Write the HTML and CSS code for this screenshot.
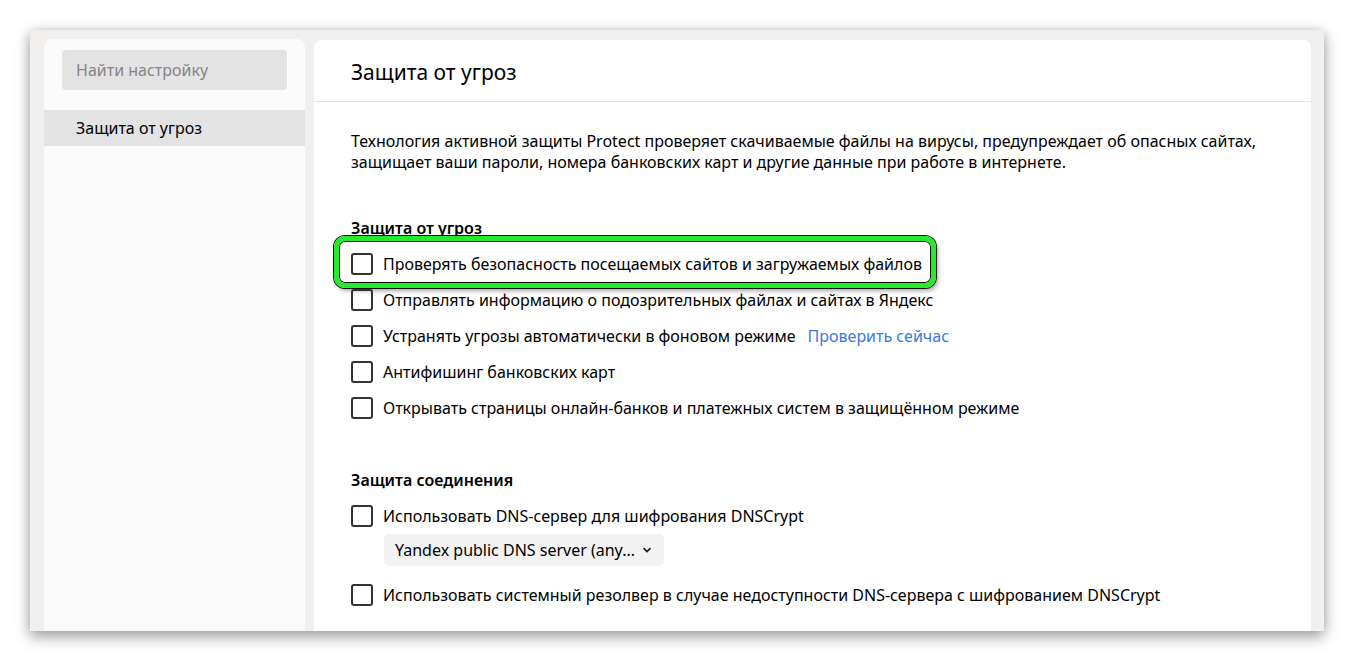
FILE: index.html
```html
<!DOCTYPE html>
<html lang="ru">
<head>
<meta charset="utf-8">
<link rel="stylesheet" href="styles.css">
</head>
<body>
<div class="window">
  <aside class="sidebar">
    <div class="search">Найти настройку</div>
    <nav class="nav">
      <div class="nav-item active">Защита от угроз</div>
    </nav>
  </aside>
  <main class="main">
    <header class="main-header"><h1 class="title">Защита от угроз</h1></header>
    <div class="content">
      <p class="desc">Технология активной защиты Protect проверяет скачиваемые файлы на вирусы, предупреждает об опасных сайтах, защищает ваши пароли, номера банковских карт и другие данные при работе в интернете.</p>

      <h2 class="section-title">Защита от угроз</h2>
      <div class="list">
        <div class="row highlight"><span class="box"></span><span class="label">Проверять безопасность посещаемых сайтов и загружаемых файлов</span></div>
        <div class="row"><span class="box"></span><span class="label">Отправлять информацию о подозрительных файлах и сайтах в Яндекс</span></div>
        <div class="row"><span class="box"></span><span class="label">Устранять угрозы автоматически в фоновом режиме</span><span class="link">Проверить сейчас</span></div>
        <div class="row"><span class="box"></span><span class="label">Антифишинг банковских карт</span></div>
        <div class="row"><span class="box"></span><span class="label">Открывать страницы онлайн-банков и платежных систем в защищённом режиме</span></div>
      </div>

      <h2 class="section-title second">Защита соединения</h2>
      <div class="list">
        <div class="row"><span class="box"></span><span class="label">Использовать DNS-сервер для шифрования DNSCrypt</span></div>
        <div class="select">Yandex public DNS server (any...<svg class="chev" width="10" height="6" viewBox="0 0 10 6"><path d="M1.5 1.2 L5 4.6 L8.5 1.2" fill="none" stroke="#222" stroke-width="1.8"/></svg></div>
        <div class="row"><span class="box"></span><span class="label">Использовать системный резолвер в случае недоступности DNS-сервера с шифрованием DNSCrypt</span></div>
      </div>
    </div>
  </main>
</div>
</body>
</html>
```

FILE: styles.css
```css
html, body {
  margin: 0;
  padding: 0;
  background: #ffffff;
  height: 100%;
  overflow: hidden;
}
body {
  font-family: "Noto Sans", "Open Sans", sans-serif;
  font-size: 16px;
  color: #000;
}
.window {
  margin: 30px 0 0 30px;
  width: 1294px;
  height: 601px;
  background: #f1f0ef;
  box-shadow: 0 6px 14px rgba(0,0,0,0.35), 0 0 10px rgba(0,0,0,0.12);
  display: flex;
  gap: 9px;
  padding: 9px 13px 0 14px;
  box-sizing: border-box;
  overflow: hidden;
}
.sidebar {
  width: 261px;
  flex: none;
  background: #fafafa;
  border-radius: 8px 8px 0 0;
  padding-top: 11px;
}
.search {
  margin: 0 18px;
  height: 40px;
  background: #e3e3e3;
  border-radius: 4px;
  color: #858585;
  display: flex;
  align-items: center;
  padding-left: 14px;
  box-sizing: border-box;
}
.nav {
  margin-top: 20px;
}
.nav-item {
  height: 36px;
  display: flex;
  align-items: center;
  padding-left: 32px;
}
.nav-item.active {
  background: #e3e3e3;
}
.main {
  flex: 1;
  margin-top: 1px;
  background: #fff;
  border-radius: 8px 8px 0 0;
}
.main-header {
  height: 61px;
  border-bottom: 1px solid #e5e5e5;
  display: flex;
  align-items: center;
  padding-left: 37px;
}
.title {
  margin: 0;
  font-size: 21px;
  font-weight: 400;
  padding-top: 2px;
}
.content {
  padding: 29px 37px 0;
}
.desc {
  margin: 0;
  line-height: 21px;
  max-width: 910px;
}
.section-title {
  margin: 44px 0 0;
  font-size: 16px;
  font-weight: 600;
  line-height: 22px;
}
.section-title.second {
  margin-top: 43px;
}
.list {
  display: flex;
  flex-direction: column;
  margin-top: 7px;
}
.row {
  display: flex;
  align-items: center;
  height: 36px;
  position: relative;
}
.box {
  width: 22px;
  height: 22px;
  box-sizing: border-box;
  border: 2px solid #333;
  border-radius: 3px;
  margin-right: 10px;
  flex: none;
}
.link {
  color: #3a7ad8;
  margin-left: 12px;
}
.highlight::before {
  content: "";
  position: absolute;
  left: -17px;
  top: -10px;
  width: 602px;
  height: 52px;
  box-sizing: border-box;
  border: 5px solid #26ea2c;
  border-radius: 11px;
  box-shadow: 0 0 0 1px #111, inset 0 0 0 1px #111, 2px 3px 4px rgba(0,0,0,0.35);
}
.select {
  margin: 0 0 0 33px;
  width: 280px;
  height: 32px;
  background: #f2f2f2;
  border-radius: 5px;
  display: flex;
  align-items: center;
  padding: 0 12px 0 11px;
  box-sizing: border-box;
  justify-content: space-between;
}
.chev {
  flex: none;
}
.select + .row {
  margin-top: 11px;
}
```
